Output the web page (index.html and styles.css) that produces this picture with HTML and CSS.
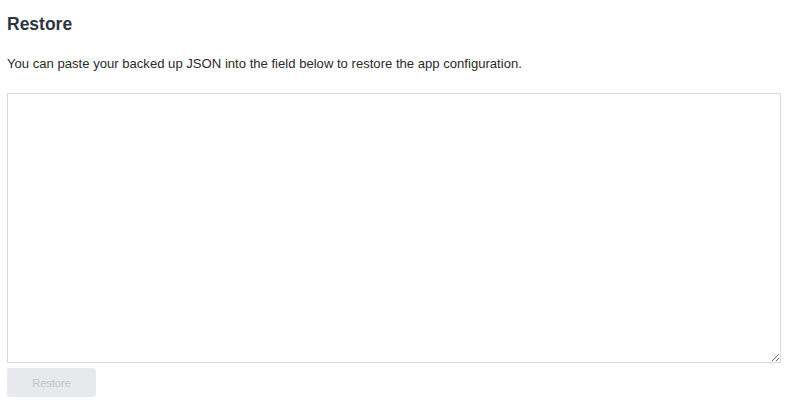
FILE: index.html
```html
<!DOCTYPE html>
<html>
<head>
<meta charset="utf-8">
<link rel="stylesheet" href="styles.css">
</head>
<body>
<main class="page">
  <h1 class="title">Restore</h1>
  <p class="hint">You can paste your backed up JSON into the field below to restore the app configuration.</p>
  <textarea class="json-field"></textarea>
  <button class="restore-btn" disabled>Restore</button>
</main>
</body>
</html>
```
FILE: styles.css
```css
html, body {
  margin: 0;
  padding: 0;
  background: #ffffff;
}
.page {
  padding: 0 10px 0 7px;
  font-family: "Liberation Sans", Arial, sans-serif;
  display: flex;
  flex-direction: column;
  align-items: flex-start;
}
.title {
  margin: 13px 0 0 0;
  font-size: 17.5px;
  line-height: 22px;
  font-weight: 700;
  color: #2d3640;
}
.hint {
  margin: 20px 0 0 0;
  font-size: 13.1px;
  line-height: 18px;
  color: #2a2a2a;
}
.json-field {
  box-sizing: border-box;
  margin: 20px 0 0 0;
  width: 100%;
  height: 270px;
  border: 1px solid #d9d9d9;
  border-radius: 0;
  resize: vertical;
  padding: 6px;
  font-family: "Liberation Mono", monospace;
  font-size: 13px;
}
.restore-btn {
  margin-top: 5px;
  width: 89px;
  height: 29px;
  border: none;
  border-radius: 3px;
  background: #e8e9ec;
  color: #c3c6cc;
  font-family: "Liberation Sans", Arial, sans-serif;
  font-size: 11px;
}
```
